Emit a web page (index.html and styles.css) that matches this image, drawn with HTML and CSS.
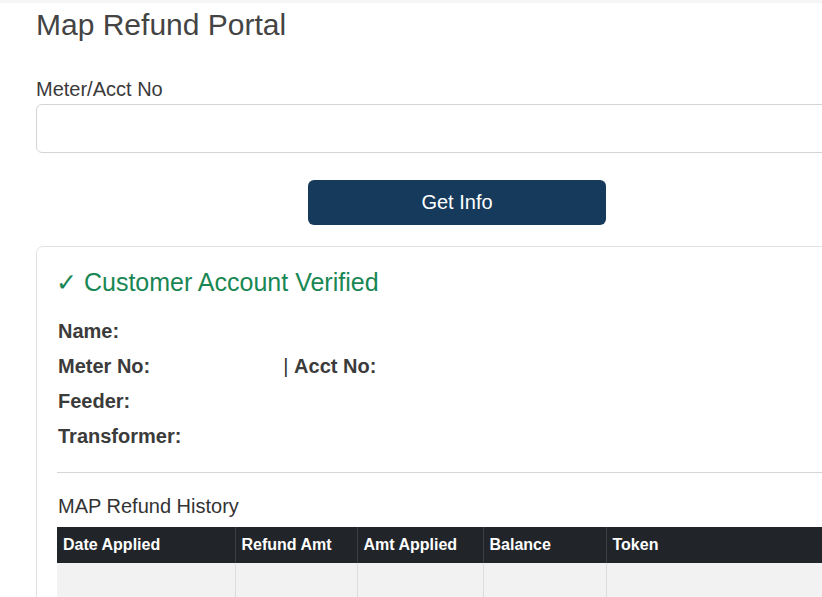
FILE: index.html
```
<!DOCTYPE html>
<html lang="en">
<head>
<meta charset="utf-8">
<title>Map Refund Portal</title>
<link rel="stylesheet" href="styles.css">
</head>
<body>
<div class="topstrip"></div>
<main class="container">
  <h1 class="page-title">Map Refund Portal</h1>
  <label class="form-label" for="acct">Meter/Acct No</label>
  <input class="form-control" id="acct" type="text" value="">
  <div class="btn-row">
    <button class="btn-primary" type="button">Get Info</button>
  </div>
  <section class="card">
    <h5 class="verified"><span class="check">✓</span> Customer Account Verified</h5>
    <div class="info">
      <p class="info-line"><b>Name:</b> <span class="redact w1"></span></p>
      <p class="info-line"><b>Meter No:</b> <span class="redact w2"></span> | <b>Acct No:</b> <span class="redact w1"></span></p>
      <p class="info-line"><b>Feeder:</b> <span class="redact w1"></span></p>
      <p class="info-line"><b>Transformer:</b> <span class="redact w1"></span></p>
    </div>
    <hr class="divider">
    <h6 class="history-title">MAP Refund History</h6>
    <table class="history">
      <colgroup>
        <col class="c1"><col class="c2"><col class="c3"><col class="c4"><col class="c5">
      </colgroup>
      <thead>
        <tr><th>Date Applied</th><th>Refund Amt</th><th>Amt Applied</th><th>Balance</th><th>Token</th></tr>
      </thead>
      <tbody>
        <tr><td></td><td></td><td></td><td></td><td></td></tr>
      </tbody>
    </table>
  </section>
</main>
</body>
</html>
```
FILE: styles.css
```
html, body {
  margin: 0;
  padding: 0;
  overflow: hidden;
  background: #ffffff;
}
body {
  font-family: "Liberation Sans", Arial, sans-serif;
  color: #333333;
}
.topstrip {
  height: 3px;
  background: #f6f6f6;
}
.container {
  width: 842px;
  margin-left: 36px;
  box-sizing: border-box;
}
.page-title {
  margin: 4px 0 0 0;
  font-size: 30px;
  line-height: 36px;
  font-weight: normal;
  color: #444444;
}
.form-label {
  display: block;
  margin: 32px 0 0 0;
  font-size: 20px;
  line-height: 29px;
  color: #3a3a3a;
}
.form-control {
  display: block;
  width: 100%;
  height: 49px;
  box-sizing: border-box;
  margin: 0;
  padding: 0 20px;
  border: 1px solid #d4d4d4;
  border-radius: 6px;
  font-family: inherit;
  font-size: 20px;
  color: #333;
  background: #fff;
  outline: none;
}
.btn-row {
  display: flex;
  justify-content: center;
  margin-top: 27px;
}
.btn-primary {
  width: 298px;
  height: 45px;
  border: none;
  border-radius: 6px;
  background: #163a5b;
  color: #ffffff;
  font-family: inherit;
  font-size: 20px;
  padding: 0;
}
.card {
  margin-top: 21px;
  border: 1px solid #e2e2e2;
  border-radius: 7px;
  padding: 20px 20px 0 20px;
  box-sizing: border-box;
  min-height: 400px;
}
.verified {
  margin: 0;
  font-size: 25px;
  line-height: 30px;
  font-weight: normal;
  color: #198754;
}
.check {
  margin-left: -1px;
}
.info {
  margin-top: 17px;
}
.info-line {
  margin: 0 0 0 1px;
  font-size: 20px;
  line-height: 35px;
  color: #333333;
}
.info-line b {
  color: #3b3b3b;
}
.redact {
  display: inline-block;
  height: 1px;
}
.redact.w1 { width: 60px; }
.redact.w2 { width: 122px; }
.divider {
  margin: 18px 0 0 0;
  border: 0;
  border-top: 1px solid #d6d6d6;
}
.history-title {
  margin: 21px 0 0 1px;
  font-size: 20px;
  line-height: 24px;
  font-weight: normal;
  color: #333333;
}
.history {
  margin-top: 9px;
  width: 100%;
  border-collapse: collapse;
  table-layout: fixed;
}
.c1 { width: 178px; }
.c2 { width: 122px; }
.c3 { width: 126px; }
.c4 { width: 123px; }
.history th {
  background: #212529;
  color: #ffffff;
  font-size: 16px;
  font-weight: bold;
  text-align: left;
  padding: 5px 5px 5px 6px;
  line-height: 26px;
  border-left: 1px solid #3a3f44;
  white-space: nowrap;
}
.history th:first-child,
.history td:first-child {
  border-left: none;
}
.history td {
  background: #f2f2f2;
  height: 36px;
  padding: 0 5px;
  border-left: 1px solid #dcdcdc;
}
```
